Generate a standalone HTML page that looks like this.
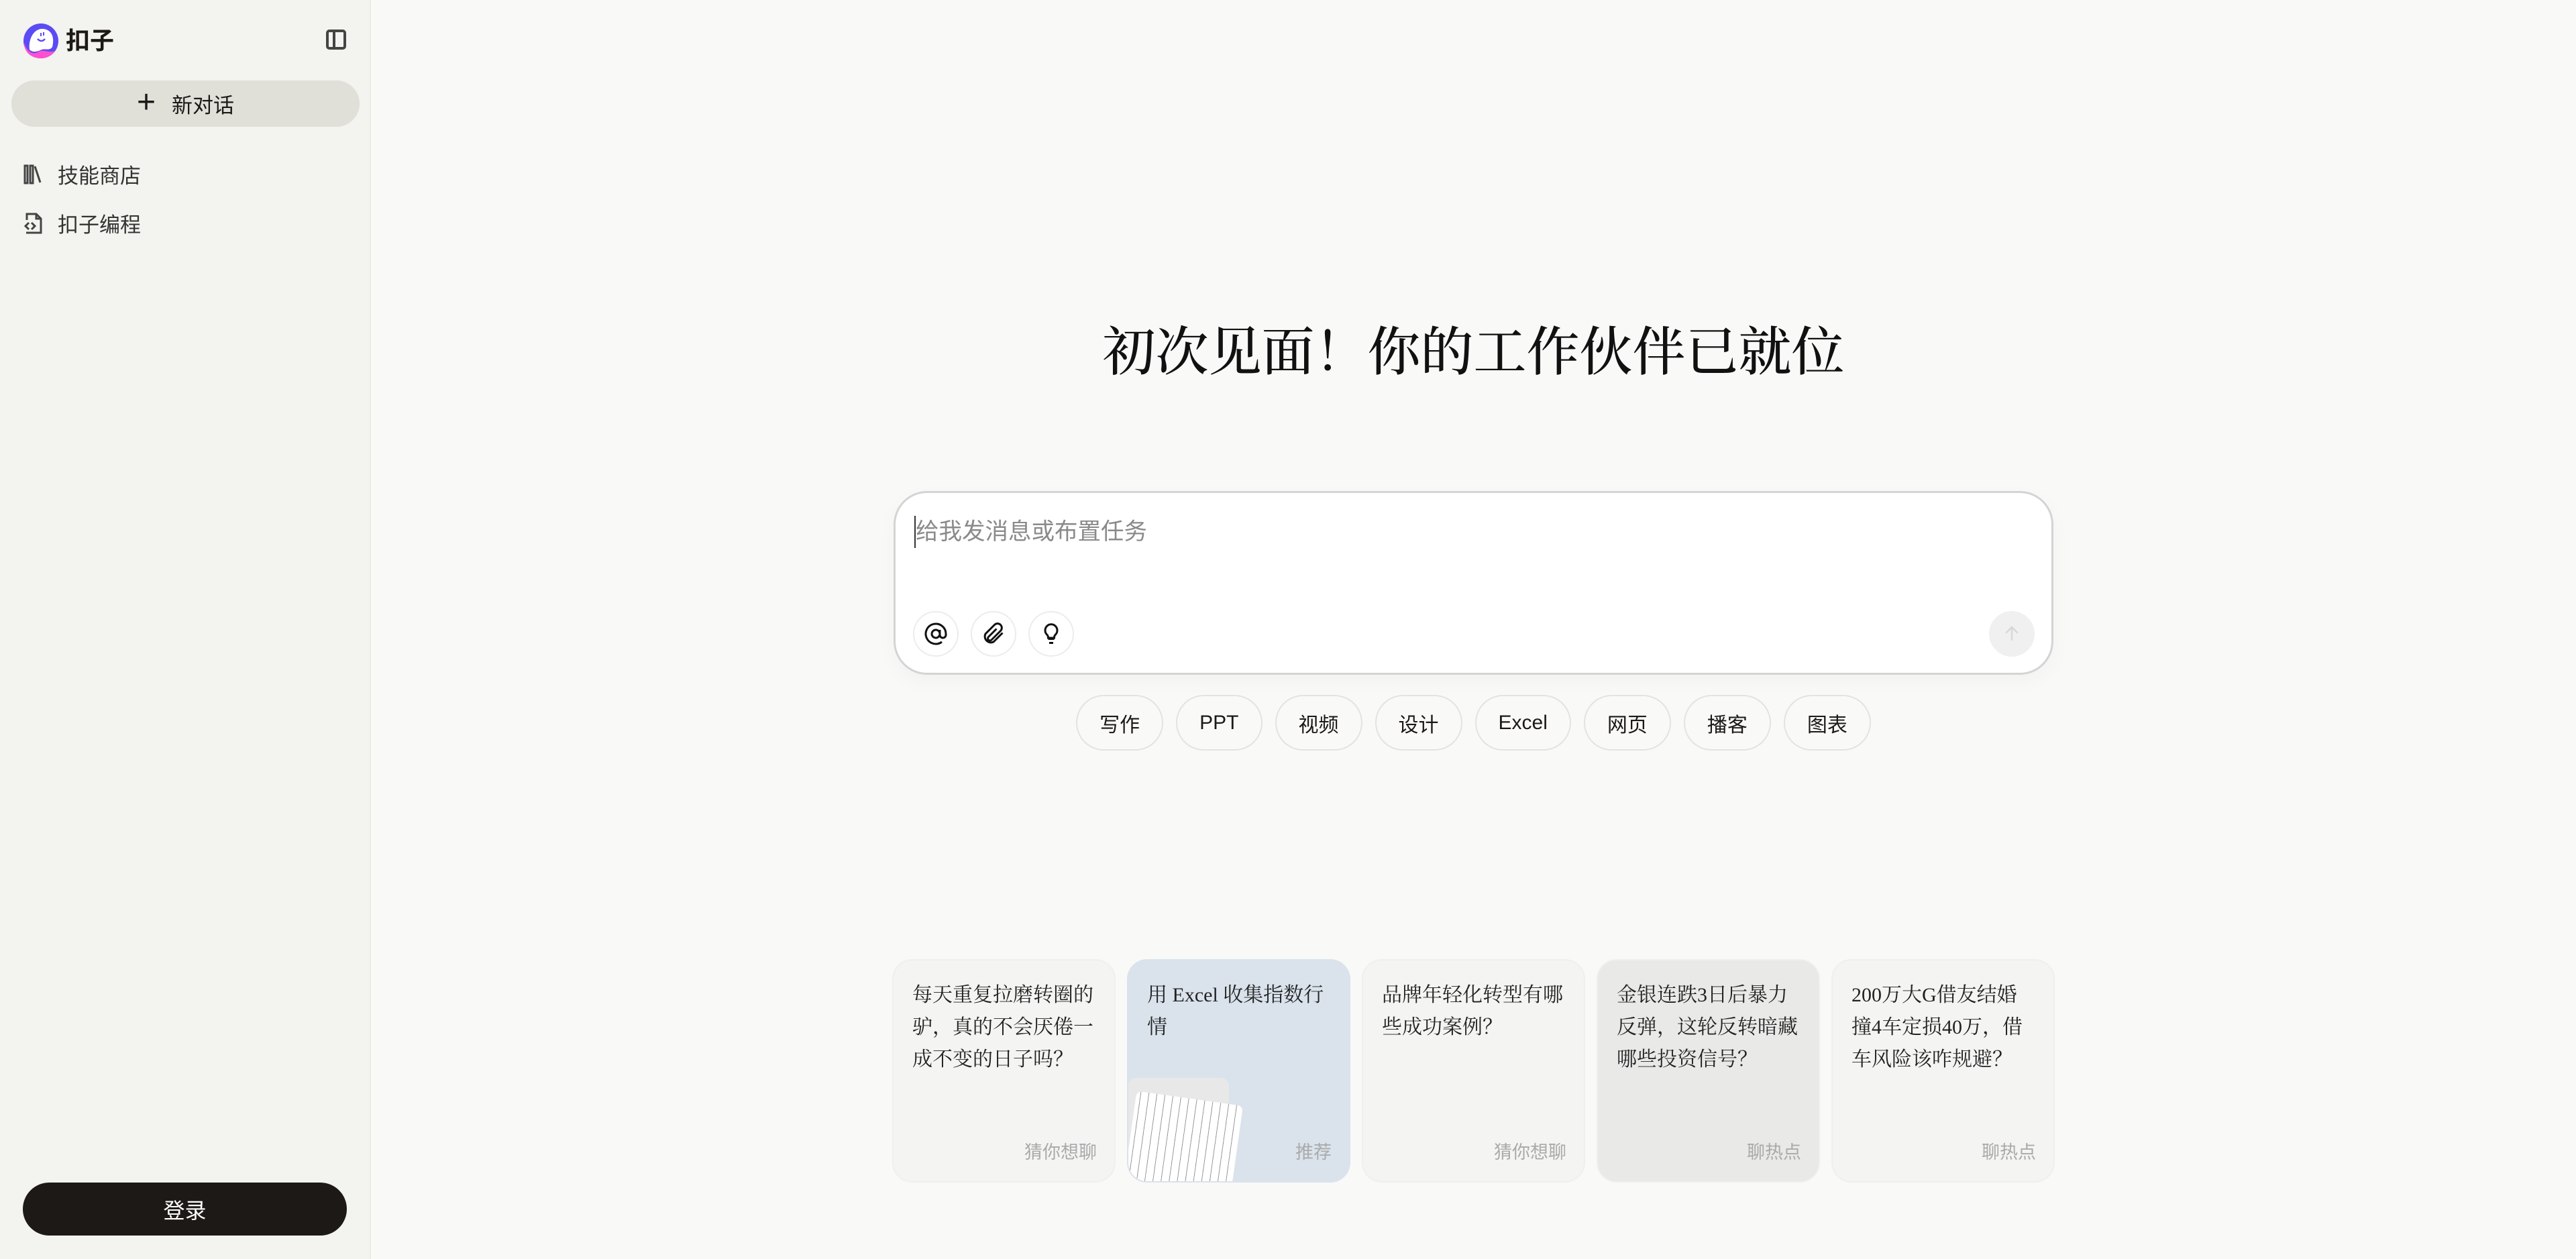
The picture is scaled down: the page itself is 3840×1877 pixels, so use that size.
<!DOCTYPE html>
<html><head><meta charset="utf-8"><style>
*{box-sizing:border-box;margin:0;padding:0}
body{width:3840px;height:1877px;background:#f9f9f8;font-family:"Liberation Sans","Noto Sans CJK SC",sans-serif;position:relative;overflow:hidden;color:#1c1917}
.side{position:absolute;left:0;top:0;width:553px;height:1877px;background:#f3f3ef;border-right:2px solid #ebebe6}
.logo{position:absolute;left:34px;top:34px;width:54px;height:54px}
.brand{position:absolute;left:98px;top:34px;font-size:36px;font-weight:bold;line-height:54px}
.toggle{position:absolute;left:486px;top:44px;width:30px;height:30px;border:4px solid #444;border-radius:5px}
.toggle:after{content:"";position:absolute;left:6px;top:0;bottom:0;width:4px;background:#444}
.newchat{position:absolute;left:17px;top:120px;width:519px;height:69px;border-radius:35px;background:#e0dfd8;display:flex;align-items:center;justify-content:center;font-size:31px;gap:24px}
.newchat b{font-weight:normal;font-size:48px;line-height:1;margin-top:-4px}
.item{position:absolute;left:34px;font-size:31px;color:#333;display:flex;align-items:center;gap:22px}
.login{position:absolute;left:34px;top:1763px;width:483px;height:79px;border-radius:40px;background:#1c1917;color:#fff;font-size:32px;display:flex;align-items:center;justify-content:center}
.title{position:absolute;left:553px;right:0;top:477px;text-align:center;font-family:"Liberation Serif","Noto Serif CJK SC",serif;font-size:79px;line-height:100px;color:#111;font-weight:500}
.box{position:absolute;left:1332px;top:732px;width:1729px;height:274px;background:#fff;border:3px solid #d4d4d4;border-radius:50px;box-shadow:0 10px 30px rgba(0,0,0,.03)}
.ph{position:absolute;left:28px;top:34px;font-size:34.5px;color:#8a8a8a;border-left:2px solid #333;line-height:48px}
.ib{position:absolute;top:176px;width:68px;height:68px;border-radius:50%;border:2px solid #ececec;display:flex;align-items:center;justify-content:center}
.send{position:absolute;left:1630px;top:176px;width:68px;height:68px;border-radius:50%;background:#f0f0f0;display:flex;align-items:center;justify-content:center}
.chips{position:absolute;left:553px;right:0;top:1036px;display:flex;justify-content:center;gap:19px}
.chip{height:83px;border:2px solid #e3e3e3;border-radius:42px;padding:0 33px;display:flex;align-items:center;font-size:30px;background:#f9f9f8}
.card{position:absolute;top:1430px;width:333px;height:333px;border-radius:30px;background:#f4f4f3;border:2px solid #efefee;overflow:hidden}
.card p{position:absolute;left:28px;top:28px;right:28px;font-family:"Liberation Serif","Noto Serif CJK SC",serif;font-size:30px;line-height:48px;color:#222}
.card span{position:absolute;right:26px;bottom:26px;font-size:27px;color:#aaa}
</style></head><body>
<div class="side">
<svg class="logo" viewBox="0 0 54 54"><circle cx="27" cy="27" r="26" fill="#5b4bf5"/><path d="M2 30 C2 45 14 53 27 53 C36 53 44 48 48 42 C38 46 30 38 22 44 C14 48 6 42 2 30Z" fill="#ff4fd0"/><path d="M10 40 C8 22 18 8 30 9 C42 10 48 20 44 36 C40 42 34 38 28 40 C20 44 14 44 10 40Z" fill="#fff"/><path d="M22 24 Q28 30 33 24" stroke="#5b4bf5" stroke-width="2.5" fill="none"/><path d="M27 15v5M31 14v5" stroke="#5b4bf5" stroke-width="2"/></svg>
<div class="brand">扣子</div>
<div class="toggle"></div>
<div class="newchat"><b>+</b>新对话</div>
<div class="item" style="top:237px"><svg width="30" height="32" viewBox="0 0 30 32" fill="none" stroke="#444" stroke-width="3"><rect x="3" y="3" width="4" height="26"/><rect x="11" y="3" width="4" height="26"/><path d="M18 4l8 24"/></svg>技能商店</div>
<div class="item" style="top:310px"><svg width="30" height="34" viewBox="0 0 30 34" fill="none" stroke="#444" stroke-width="3"><path d="M6 12V3h14l7 7v21H5"/><path d="M20 3v7h7M9 16l-5 5 5 5M13 16l5 5-5 5"/></svg>扣子编程</div>
<div class="login">登录</div>
</div>
<div class="title">初次见面！你的工作伙伴已就位</div>
<div class="box">
<div class="ph">给我发消息或布置任务</div>
<div class="ib" style="left:26px"><svg width="36" height="36" viewBox="0 0 24 24" fill="none" stroke="#111" stroke-width="2"><circle cx="12" cy="12" r="4"/><path d="M16 8v5a3 3 0 0 0 6 0v-1a10 10 0 1 0-4 8"/></svg></div>
<div class="ib" style="left:112px"><svg width="36" height="36" viewBox="0 0 24 24" fill="none" stroke="#111" stroke-width="2"><path d="M21 11l-9 9a6 6 0 0 1-8-8l9-9a4 4 0 0 1 6 6l-9 9a2 2 0 0 1-3-3l8-8"/></svg></div>
<div class="ib" style="left:198px"><svg width="36" height="36" viewBox="0 0 24 24" fill="none" stroke="#111" stroke-width="2"><path d="M9 17h6M10 21h4M8 13a6 6 0 1 1 8 0c-1 1-1 2-1 3H9c0-1 0-2-1-3z"/></svg></div>
<div class="send"><svg width="30" height="30" viewBox="0 0 24 24" fill="none" stroke="#d8d8d8" stroke-width="2"><path d="M12 20V4M5 11l7-7 7 7"/></svg></div>
</div>
<div class="chips"><div class="chip">写作</div><div class="chip">PPT</div><div class="chip">视频</div><div class="chip">设计</div><div class="chip">Excel</div><div class="chip">网页</div><div class="chip">播客</div><div class="chip">图表</div></div>
<div class="card" style="left:1330px"><p>每天重复拉磨转圈的驴，真的不会厌倦一成不变的日子吗？</p><span>猜你想聊</span></div>
<div class="card" style="left:1680px;background:#dae3ec;border-color:#dae3ec"><p>用 Excel 收集指数行情</p><div style="position:absolute;left:0;top:175px;width:150px;height:160px;background:#e8e8e8;border-radius:12px"></div><div style="position:absolute;left:2px;top:205px;width:160px;height:140px;background:repeating-linear-gradient(90deg,#fff 0 6px,#999 6px 7px,#fff 7px 12px);transform:rotate(8deg);border-radius:8px"></div><span>推荐</span></div>
<div class="card" style="left:2030px"><p>品牌年轻化转型有哪些成功案例？</p><span>猜你想聊</span></div>
<div class="card" style="left:2380px;background:#e9e9e8"><p>金银连跌3日后暴力反弹，这轮反转暗藏哪些投资信号？</p><span>聊热点</span></div>
<div class="card" style="left:2730px"><p>200万大G借友结婚撞4车定损40万，借车风险该咋规避？</p><span>聊热点</span></div>
</body></html>
